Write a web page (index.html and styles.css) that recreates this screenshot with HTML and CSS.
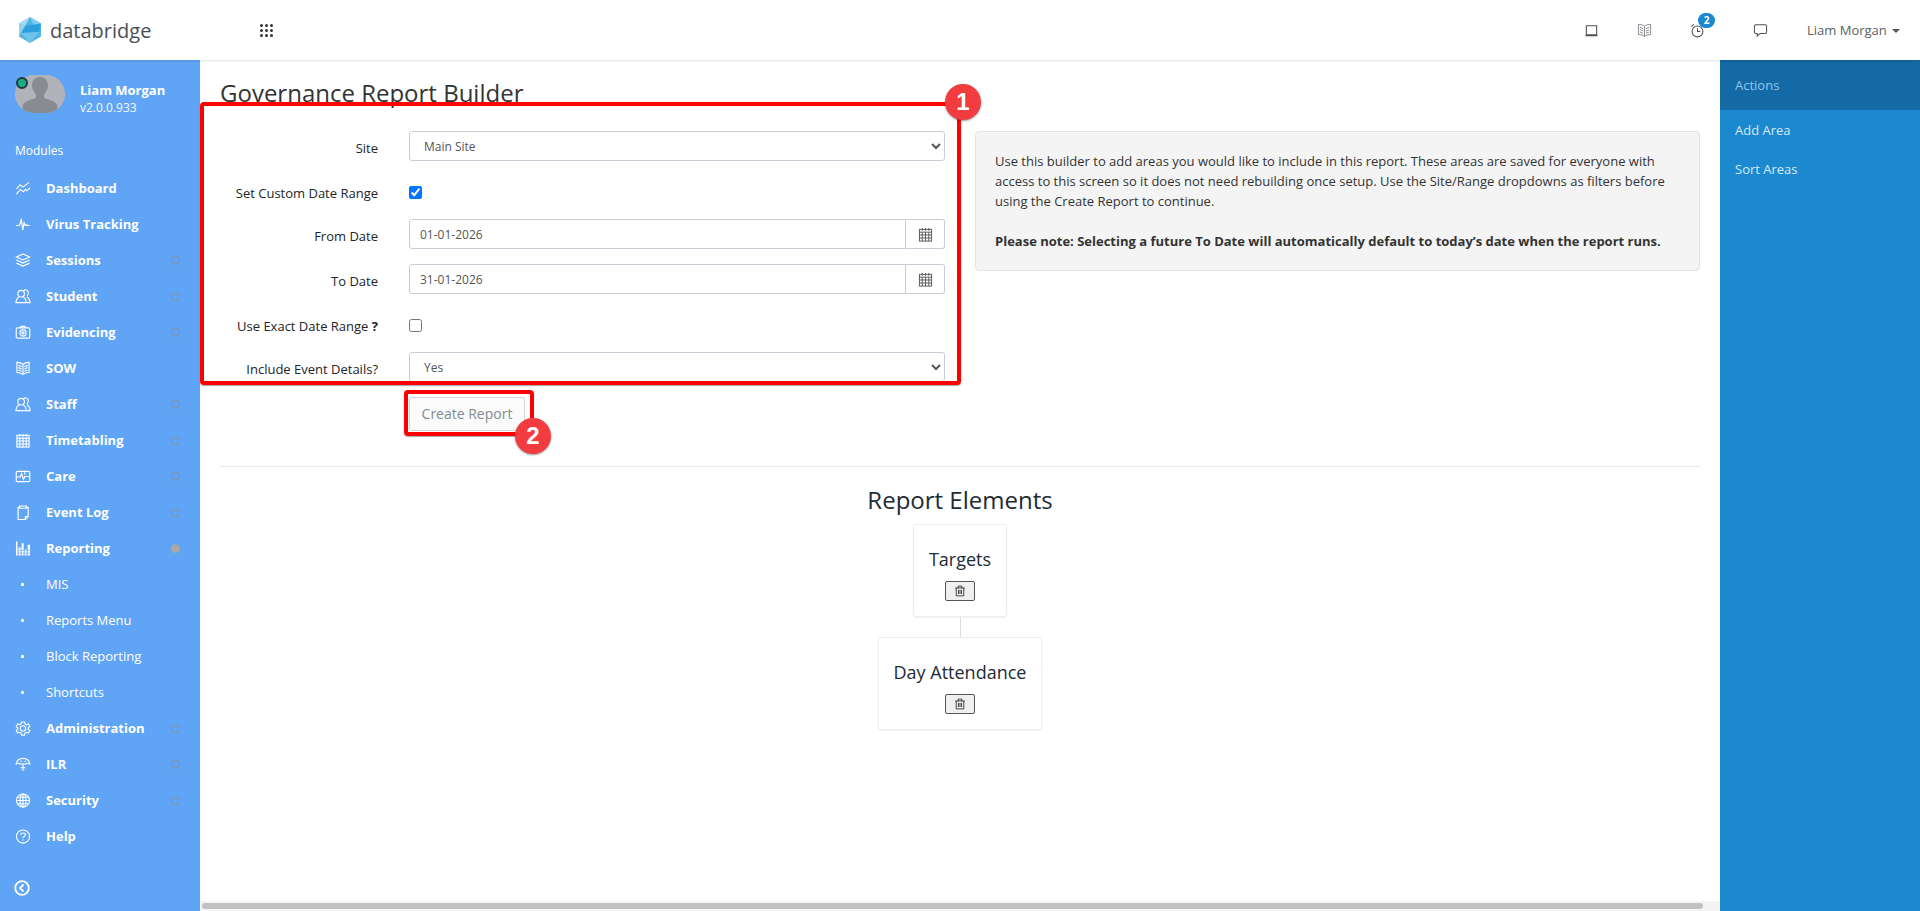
FILE: index.html
```html
<!DOCTYPE html>
<html lang="en">
<head>
<meta charset="utf-8">
<title>Governance Report Builder</title>
<link rel="stylesheet" href="styles.css">
</head>
<body>
<svg class="sprite" width="0" height="0" aria-hidden="true">
  <symbol id="i-dash" viewBox="0 0 16 16"><path d="M1 8.500l4-4.500 3 2.500 6.500-5M1 14l4-5 3.500 2.500 2-2.500 1.500 1.500 3.500-3"/></symbol>
  <symbol id="i-pulse" viewBox="0 0 16 16"><path d="M.5 9H4l1-2 1.200-5 1.500 12 1.500-8 1 3h1l.8-1 .6 1h2.900"/></symbol>
  <symbol id="i-layers" viewBox="0 0 16 16"><path d="M8 1l7 3.200-7 3.200-7-3.200zM1 7.500l7 3.200 7-3.200M1 10.800L8 14l7-3.200"/></symbol>
  <symbol id="i-people" viewBox="0 0 16 16"><circle cx="6" cy="5" r="3.500"/><path d="M8.500 1.800a3 3 0 0 1 2.500-.8c2.200.3 3 2.200 2.500 4.200-.3 1-.8 1.800-1.300 2.300M3.800 8.500C2 9.300.8 11 .5 14.500h11c-.3-3.500-1.500-5.200-3.300-6M11.500 14.500h4c-.2-2.800-1.200-5-3.300-6"/></symbol>
  <symbol id="i-camera" viewBox="0 0 16 16"><rect x=".8" y="3" width="14.400" height="11" rx="1.500"/><circle cx="8" cy="8.500" r="3.300"/><circle cx="8" cy="8.500" r="1.200"/><path d="M5 3l1-1.500h4L11 3"/></symbol>
  <symbol id="i-book" viewBox="0 0 16 16"><path d="M8 3.500C6.500 2 4 1.500 1.500 1.500v10.800c2.500 0 4.800.5 6.500 2 1.700-1.500 4-2 6.500-2V1.500C12 1.500 9.500 2 8 3.500zM8 3.500v10.800M3 4.500l3.500 1.500M3 7l3.500 1.500M3 9.500L6.500 11M13 4.500L9.500 6M13 7L9.500 8.500M13 9.500L9.500 11"/></symbol>
  <symbol id="i-cal" viewBox="0 0 16 16"><rect x="1.500" y="2.500" width="13" height="12.500"/><path d="M1.500 5.500h13M4.500 1v3M8 1v3M11.500 1v3M4.500 5.500V15M8 5.500V15M11.500 5.500V15M1.500 8.500h13M1.500 11.700h13"/></symbol>
  <symbol id="i-care" viewBox="0 0 16 16"><rect x=".8" y="2.500" width="14.400" height="11" rx="1.500"/><path d="M.8 8.500H5l1.500-3.500L8.500 11 10 8h5.200M10 2.500V6"/></symbol>
  <symbol id="i-clip" viewBox="0 0 16 16"><path d="M4 2.500H2.800v13h7.700l3-3.200V2.500H12M4.500 1h7v2.500h-7zM10.500 15.500v-3.200h3"/></symbol>
  <symbol id="i-bars" viewBox="0 0 16 16"><path class="fill" d="M.5 15.500V.5h1.600v15zM3.200 15.500V7h2.400v8.500zM6.500 15.500V2.500h2.200v13zM9.700 15.500V9h2.300v6.500zM13 15.500V4h2.500v11.500z"/><path d="M3 10h13M3 13h13" stroke="#60a5f5" stroke-width=".6"/></symbol>
  <symbol id="i-gear" viewBox="0 0 16 16"><circle cx="8" cy="8" r="2.900"/><path d="M6.500 1h3l.6 2 1.700.9 1.900-.7 1.500 2.600-1.500 1.400v1.600l1.500 1.400-1.500 2.600-1.900-.7-1.700.9-.6 2h-3l-.6-2-1.700-.9-1.900.7L.8 10.200l1.500-1.400V7.200L.8 5.800l1.500-2.600 1.900.7 1.700-.9z"/></symbol>
  <symbol id="i-ilr" viewBox="0 0 16 16"><path d="M.8 7.500C.8 3.500 4.500 1.500 8 1.500s7.200 2 7.200 6c-1.300-1.200-3-1.200-4 0H4.800c-1-1.200-2.700-1.200-4 0zM8 7.500v7.500M5.500 11.500h5M5 4.500h2M9.500 4.500h2"/></symbol>
  <symbol id="i-globe" viewBox="0 0 16 16"><circle cx="8" cy="8" r="7"/><ellipse cx="8" cy="8" rx="3.200" ry="7"/><path d="M8 1v14M1 8h14M2 4.500h12M2 11.500h12"/></symbol>
  <symbol id="i-help" viewBox="0 0 16 16"><circle cx="8" cy="8" r="7"/><path d="M5.500 6.200C5.800 4.800 7 4.200 8 4.200c1.500 0 2.600.9 2.600 2 0 1.700-2.600 1.900-2.600 3.500M8 11v1.200"/></symbol>
  <symbol id="i-laptop" viewBox="0 0 16 16"><path d="M2.500 3h11v9.500h-11zM1.500 13.500h13"/></symbol>
  <symbol id="i-clock" viewBox="0 0 16 16"><circle cx="8" cy="9" r="5.800"/><path d="M8 5.500V9h3M1.500 4L4 1.500M14.500 4L12 1.500"/></symbol>
  <symbol id="i-chat" viewBox="0 0 16 16"><path d="M3 1.800h10a1.500 1.500 0 0 1 1.500 1.500v6.400a1.500 1.500 0 0 1-1.500 1.500H7.500L4.500 14v-2.800H3a1.500 1.500 0 0 1-1.500-1.500V3.300A1.500 1.500 0 0 1 3 1.800z"/></symbol>
  <symbol id="i-trash" viewBox="0 0 16 16"><path d="M1.500 4h13M5.500 4V1.500h5V4M3 4v10.500h10V4M6 6.500v5.500M8 6.500v5.500M10 6.500v5.500"/></symbol>
  <symbol id="i-back" viewBox="0 0 16 16"><circle cx="8" cy="8" r="6.800"/><path d="M9.500 4.500L6 8l3.500 3.500"/></symbol>
</svg>

<header class="topbar">
  <div class="brand">
    <svg class="logo" viewBox="0 0 24 26">
      <polygon points="12,0 23,6.500 23,19.500 12,26 1,19.500 1,6.500" fill="#4fb3e3"/>
      <polygon points="12,0 23,6.500 17,11" fill="#7fcdee"/>
      <polygon points="1,6.500 12,0 7,9" fill="#a5dcf2"/>
      <polygon points="7,9 23,6.500 21,15 3,16" fill="#2c9fdf"/>
      <polygon points="3,16 21,15 12,26" fill="#6ec3ea"/>
      <polygon points="1,6.500 7,9 3,16 1,19.500" fill="#8fd3ef"/>
    </svg>
    <span class="brand-name">databridge</span>
  </div>
  <div class="apps" aria-label="Apps">
    <i></i><i></i><i></i><i></i><i></i><i></i><i></i><i></i><i></i>
  </div>
  <nav class="top-tools">
    <svg class="tool"><use href="#i-laptop"/></svg>
    <svg class="tool tool-book"><use href="#i-book"/></svg>
    <span class="tool-wrap"><svg class="tool"><use href="#i-clock"/></svg><span class="count">2</span></span>
    <svg class="tool tool-chat"><use href="#i-chat"/></svg>
    <span class="user-menu">Liam Morgan<span class="caret"></span></span>
  </nav>
</header>

<div class="shell">
  <aside class="sidebar">
    <div class="profile">
      <div class="avatar">
        <svg viewBox="0 0 50 38"><path d="M25 2c5 0 8 4 8 8.500 0 4-2 7-4 9v3c3 2 11 3 13 7l1 8.500H7l1-8.500c2-4 10-5 13-7v-3c-2-2-4-5-4-9C17 6 20 2 25 2z"/></svg>
        <span class="status"></span>
      </div>
      <div class="who"><strong>Liam Morgan</strong><span>v2.0.0.933</span></div>
    </div>
    <div class="modules">Modules</div>
    <ul class="nav">
      <li><svg><use href="#i-dash"/></svg><b>Dashboard</b></li>
      <li><svg><use href="#i-pulse"/></svg><b>Virus Tracking</b></li>
      <li><svg><use href="#i-layers"/></svg><b>Sessions</b><em></em></li>
      <li><svg><use href="#i-people"/></svg><b>Student</b><em></em></li>
      <li><svg><use href="#i-camera"/></svg><b>Evidencing</b><em></em></li>
      <li><svg><use href="#i-book"/></svg><b>SOW</b></li>
      <li><svg><use href="#i-people"/></svg><b>Staff</b><em></em></li>
      <li><svg><use href="#i-cal"/></svg><b>Timetabling</b><em></em></li>
      <li><svg><use href="#i-care"/></svg><b>Care</b><em></em></li>
      <li><svg><use href="#i-clip"/></svg><b>Event Log</b><em></em></li>
      <li><svg><use href="#i-bars"/></svg><b>Reporting</b><em class="on"></em></li>
      <li class="sub"><u></u><span>MIS</span></li>
      <li class="sub"><u></u><span>Reports Menu</span></li>
      <li class="sub"><u></u><span>Block Reporting</span></li>
      <li class="sub"><u></u><span>Shortcuts</span></li>
      <li><svg><use href="#i-gear"/></svg><b>Administration</b><em></em></li>
      <li><svg><use href="#i-ilr"/></svg><b>ILR</b><em></em></li>
      <li><svg><use href="#i-globe"/></svg><b>Security</b><em></em></li>
      <li><svg><use href="#i-help"/></svg><b>Help</b></li>
    </ul>
    <svg class="collapse"><use href="#i-back"/></svg>
  </aside>

  <main class="main">
    <div class="content">
      <h1 class="title">Governance Report Builder</h1>
      <div class="columns">
        <form class="form">
          <label class="lbl">Site</label>
          <select class="ctl"><option>Main Site</option></select>
          <label class="lbl lbl-check">Set Custom Date Range</label>
          <div class="check"><input type="checkbox" checked></div>
          <label class="lbl">From Date</label>
          <div class="group"><input class="ctl" value="01-01-2026"><span class="addon"><svg><use href="#i-cal"/></svg></span></div>
          <label class="lbl">To Date</label>
          <div class="group"><input class="ctl" value="31-01-2026"><span class="addon"><svg><use href="#i-cal"/></svg></span></div>
          <label class="lbl lbl-check">Use Exact Date Range <strong>?</strong></label>
          <div class="check"><input type="checkbox"></div>
          <label class="lbl">Include Event Details?</label>
          <select class="ctl"><option>Yes</option></select>
          <span></span>
          <div><button type="button" class="create">Create Report</button></div>
        </form>
        <div class="well">
          <p>Use this builder to add areas you would like to include in this report. These areas are saved for everyone with access to this screen so it does not need rebuilding once setup. Use the Site/Range dropdowns as filters before using the Create Report to continue.</p>
          <p><strong>Please note: Selecting a future To Date will automatically default to today’s date when the report runs.</strong></p>
        </div>
      </div>
      <hr class="rule">
      <section class="tree">
        <h2>Report Elements</h2>
        <div class="node"><h3>Targets</h3><button type="button" class="del"><svg><use href="#i-trash"/></svg></button></div>
        <div class="link"></div>
        <div class="node"><h3>Day Attendance</h3><button type="button" class="del"><svg><use href="#i-trash"/></svg></button></div>
      </section>
    </div>
    <div class="hscroll"><span></span></div>
    <div class="mark mark-one"></div>
    <div class="mark mark-two"></div>
    <span class="pin pin-one">1</span>
    <span class="pin pin-two">2</span>
  </main>

  <aside class="actions">
    <div class="actions-head">Actions</div>
    <a class="action">Add Area</a>
    <a class="action">Sort Areas</a>
  </aside>
</div>
</body>
</html>
```
FILE: styles.css
```css
* { box-sizing: border-box; }
html, body { margin: 0; height: 100%; overflow: hidden; }
body {
  font-family: "Open Sans", "Noto Sans", sans-serif;
  font-size: 13px;
  color: #212529;
  background: #fff;
  display: flex;
  flex-direction: column;
}
.sprite { position: absolute; }
symbol { fill: none; }

.topbar {
  height: 60px;
  flex: none;
  display: flex;
  align-items: center;
  background: #fff;
  box-shadow: 0 1px 2px rgba(0,0,0,.12);
  position: relative;
  z-index: 2;
}
.brand { width: 260px; display: flex; align-items: center; padding-left: 18px; }
.logo { width: 24px; height: 26px; flex: none; }
.brand-name { margin-left: 8px; font-size: 20px; color: #4a4f55; }
.apps { display: grid; grid-template-columns: repeat(3, 3px); gap: 2px; }
.apps i { width: 3px; height: 3px; background: #333; border-radius: 50%; }
.top-tools { margin-left: auto; display: flex; align-items: center; height: 60px; }
.tool {
  width: 15px; height: 15px;
  fill: none; stroke: #4c4f53; stroke-width: 1.1;
  margin-left: 37px; display: block;
}
.tool-book { margin-left: 38px; stroke: #777b80; stroke-width: .9; }
.tool-wrap { position: relative; display: block; margin-left: 1px; }
.tool-chat { margin-left: 48px; }
.count {
  position: absolute; left: 45px; top: -10px;
  width: 17px; height: 15px; border-radius: 8px;
  background: #1c88d0; color: #fff; font-size: 10px; font-weight: 700;
  text-align: center; line-height: 15px;
}
.user-menu { margin-left: 39px; width: 113px; color: #5a5f64; font-size: 13px; white-space: nowrap; }
.caret {
  display: inline-block; margin-left: 5px; vertical-align: 2px;
  border-top: 4px solid #555; border-left: 4px solid transparent; border-right: 4px solid transparent;
}

.shell { flex: 1; min-height: 0; display: flex; }

.sidebar {
  width: 200px; flex: none;
  background: #60a5f5;
  color: #fff;
  display: flex; flex-direction: column;
}
.profile { height: 74px; padding: 15px 0 0 15px; display: flex; }
.avatar { position: relative; width: 50px; height: 38px; border-radius: 19px; background: #b0b4ba; overflow: visible; flex: none; }
.avatar svg { width: 50px; height: 38px; display: block; fill: #888c92; border-radius: 19px; }
.status {
  position: absolute; left: 1px; top: 2px;
  width: 12px; height: 12px; border-radius: 50%;
  background: #1dab85; border: 2px solid #1f3a3a;
}
.who { margin-left: 15px; display: flex; flex-direction: column; padding-top: 6px; }
.who strong { line-height: 18px; font-size: 13px; }
.who span { font-size: 12px; line-height: 18px; color: #f2f7fe; }
.modules { height: 36px; line-height: 34px; padding-left: 15px; font-size: 12px; }
.nav { list-style: none; margin: 0; padding: 0; }
.nav li { height: 36px; display: flex; align-items: center; padding-left: 15px; position: relative; }
.nav svg { width: 16px; height: 15px; fill: none; stroke: #fff; stroke-width: 1.2; flex: none; }
.nav b { margin-left: 15px; font-weight: 700; font-size: 13px; }
.nav em {
  position: absolute; left: 171px; top: 14px;
  width: 9px; height: 9px; border-radius: 50%;
  border: 1px solid #80949f;
}
.nav em.on { background: #a8a8a8; border-color: #a8a8a8; }
.sub u { width: 3px; height: 3px; background: #fff; margin-left: 6px; border-radius: 1px; flex: none; }
.sub span { margin-left: 22px; }
.collapse { width: 16px; height: 16px; margin: 26px 0 0 14px; fill: none; stroke: #fff; stroke-width: 1.8; }
.fill { fill: #fff; stroke: none; }

.main { flex: 1; min-width: 0; display: flex; flex-direction: column; position: relative; }
.content { flex: 1; min-height: 0; padding: 15px 20px 0; }
.title { margin: 0; font-size: 24px; font-weight: 400; line-height: 36px; color: #333; height: 56px; }
.columns { display: grid; grid-template-columns: 725px 1fr; column-gap: 30px; align-items: start; }
.form { display: grid; grid-template-columns: 158px 1fr; column-gap: 31px; row-gap: 15px; }
.lbl { text-align: right; padding-top: 8px; line-height: 18px; color: #212529; }
.lbl-check { padding-top: 8px; }
.ctl {
  height: 30px; width: 100%;
  border: 1px solid #c7ced8; border-radius: 3px;
  background: #fff; color: #555;
  font-family: inherit; font-size: 12px;
  padding: 0 10px;
}
select.ctl { padding: 0 0 0 10px; }
.check { height: 28px; padding-top: 10px; line-height: 0; }
.check input { margin: 0; width: 13px; height: 13px; }
.group { display: flex; }
.group .ctl { flex: 1; min-width: 0; border-radius: 3px 0 0 3px; }
.addon {
  width: 39px; height: 30px; flex: none;
  border: 1px solid #c7ced8; border-left: 0; border-radius: 0 3px 3px 0;
  display: flex; align-items: center; justify-content: center;
}
.addon svg { width: 15px; height: 15px; fill: none; stroke: #555; stroke-width: 1; }
.create {
  width: 116px; height: 34px; padding: 0 0 2px;
  background: #fbfbfb; border: 1px solid #d2d7de; border-radius: 2px;
  font-family: inherit; font-size: 14px; color: #858a90;
}
.well {
  height: 140px; padding: 19px;
  background: #f4f4f4; border: 1px solid #e3e3e3; border-radius: 4px;
  line-height: 20px; color: #333;
}
.well p { margin: 0 0 20px; }
.rule { margin: 35px 0 0; border: 0; border-top: 1px solid #e8eaed; }
.tree { display: flex; flex-direction: column; align-items: center; }
.tree h2 { margin: 16px 0 7px; font-size: 24px; font-weight: 400; line-height: 34px; color: #212b36; }
.node {
  height: 93px; padding: 22px 15px 0;
  border: 1px solid #eceef1; border-radius: 2px;
  box-shadow: 0 1px 2px rgba(0,0,0,.05);
  display: flex; flex-direction: column; align-items: center;
}
.node h3 { margin: 0; font-size: 18px; font-weight: 400; line-height: 24px; color: #212b36; white-space: nowrap; }
.del {
  margin-top: 10px; width: 30px; height: 20px; padding: 0;
  background: #efefef; border: 1px solid #555; border-radius: 2px;
  display: flex; align-items: center; justify-content: center;
}
.del svg { width: 12px; height: 12px; fill: none; stroke: #333; stroke-width: 1.2; }
.link { width: 1px; height: 20px; background: #dcdcdc; }

.hscroll { height: 10px; flex: none; background: #f4f4f4; padding: 2px; }
.hscroll span { display: block; width: 1501px; height: 6px; background: #c1c1c1; border-radius: 3px; }

.mark { position: absolute; border: 4px solid #f00; border-radius: 4px; box-shadow: 0 1px 1px rgba(0,0,0,.35); }
.mark-one { left: 0; top: 42px; width: 761px; height: 283px; }
.mark-two { left: 204px; top: 330px; width: 130px; height: 46px; }
.pin {
  position: absolute; width: 36px; height: 36px; border-radius: 50%;
  background: #f23c3f; color: #fff;
  font-family: "Liberation Sans", sans-serif; font-weight: 700; font-size: 24px;
  line-height: 36px; text-align: center;
  box-shadow: 0 1px 2px rgba(0,0,0,.4);
}
.pin-one { left: 745px; top: 24px; }
.pin-two { left: 315px; top: 358px; }

.actions { width: 200px; flex: none; background: #1c88d0; color: #d5ebf9; }
.actions-head { height: 50px; line-height: 50px; padding-left: 15px; background: #136aa5; color: #8fc7ee; }
.action { display: block; height: 39px; line-height: 41px; padding-left: 15px; }
```
